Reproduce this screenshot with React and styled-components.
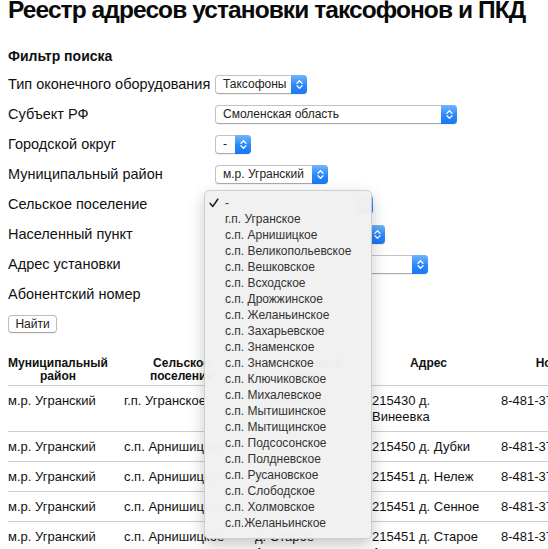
import React from 'react';
import styled, { createGlobalStyle } from 'styled-components';

const GlobalStyle = createGlobalStyle`
  html, body {
    margin: 0;
    padding: 0;
    background: #ffffff;
    overflow: hidden;
  }
  body {
    font-family: "Liberation Sans", Arial, Helvetica, sans-serif;
    color: #111111;
  }
`;

const Page = styled.div`
  padding: 0 8px;
  width: 760px;
`;

const Title = styled.h1`
  font-size: 24.5px;
  line-height: 30px;
  letter-spacing: -0.92px;
  font-weight: bold;
  margin: -5px 0 0;
  white-space: nowrap;
  color: #0a0a0a;
`;

const FilterTitle = styled.h3`
  font-size: 14px;
  line-height: 18px;
  font-weight: bold;
  margin: 22px 0 4px;
`;

const FormGrid = styled.div`
  display: grid;
  grid-template-columns: 207px auto;
  grid-auto-rows: 30px;
  align-items: center;
`;

const Label = styled.div`
  font-size: 14.5px;
  color: #111;
  white-space: nowrap;
`;

const Field = styled.div`
  position: relative;
  display: flex;
  align-items: center;
  height: 30px;
`;

const SelectBox = styled.div`
  display: flex;
  align-items: stretch;
  width: ${(p) => p.$w}px;
  height: 19px;
  box-sizing: border-box;
  border: 1px solid #c2c2c2;
  border-bottom-color: #a9a9a9;
  border-radius: 4px;
  background: #ffffff;
  box-shadow: 0 1px 1px rgba(0, 0, 0, 0.06);
  font-size: 12px;
  color: #222;
`;

const SelectText = styled.span`
  flex: 1;
  padding-left: 7px;
  line-height: 17px;
  white-space: nowrap;
  overflow: hidden;
`;

const ArrowBtn = styled.span`
  width: 16px;
  margin: -1px -1px -1px 0;
  border-radius: 0 4px 4px 0;
  background: linear-gradient(#70b6fc, #2a87fa 55%, #1878f5);
  display: flex;
  align-items: center;
  justify-content: center;
`;

const TextInput = styled.div`
  width: 140px;
  height: 19px;
  border: 1px solid #c2c2c2;
  box-sizing: border-box;
`;

const Button = styled.button`
  margin-top: 6px;
  height: 18px;
  width: 49px;
  padding: 0;
  font-family: inherit;
  font-size: 12px;
  color: #222;
  background: #ffffff;
  border: 1px solid #bdbdbd;
  border-bottom-color: #a5a5a5;
  border-radius: 4px;
  box-shadow: 0 1px 1px rgba(0, 0, 0, 0.06);
`;

const Menu = styled.div`
  position: absolute;
  left: -11px;
  top: 1px;
  width: 168px;
  box-sizing: border-box;
  padding: 4px 0 7px;
  background: rgba(241, 241, 241, 0.98);
  border: 1px solid rgba(0, 0, 0, 0.14);
  border-radius: 5px;
  box-shadow: 0 6px 16px rgba(0, 0, 0, 0.22);
  z-index: 10;
`;

const MenuItem = styled.div`
  position: relative;
  height: 16px;
  line-height: 16px;
  padding-left: 20px;
  font-size: 12px;
  color: #333;
  white-space: nowrap;
`;

const Check = styled.svg`
  position: absolute;
  left: 4px;
  top: 3px;
`;

const Table = styled.table`
  margin-top: 18px;
  border-collapse: collapse;
  table-layout: fixed;
  width: 617px;
`;

const Th = styled.th`
  box-sizing: border-box;
  width: ${(p) => p.$w}px;
  padding: 6px 16px 2px 0;
  font-size: 12px;
  line-height: 13px;
  font-weight: bold;
  text-align: center;
  vertical-align: top;
  border-bottom: 1px solid #cfcfcf;
  color: #111;
`;

const Td = styled.td`
  box-sizing: border-box;
  padding: 7px 16px 6px 0;
  font-size: 13px;
  line-height: 16px;
  vertical-align: top;
  border-top: 1px solid #cfcfcf;
  color: #111;
  white-space: ${(p) => (p.$nowrap ? 'nowrap' : 'normal')};
`;

const Chevrons = () => (
  <svg width="7" height="11" viewBox="0 0 7 11">
    <path d="M1 4.2 L3.5 1.6 L6 4.2 M1 6.8 L3.5 9.4 L6 6.8" fill="none" stroke="#fff" strokeWidth="1.3" strokeLinecap="round" strokeLinejoin="round" />
  </svg>
);

const Select = ({ w, value }) => (
  <SelectBox $w={w}>
    <SelectText>{value}</SelectText>
    <ArrowBtn>
      <Chevrons />
    </ArrowBtn>
  </SelectBox>
);

const settlements = [
  'г.п. Угранское',
  'с.п. Арнишицкое',
  'с.п. Великопольевское',
  'с.п. Вешковское',
  'с.п. Всходское',
  'с.п. Дрожжинское',
  'с.п. Желаньинское',
  'с.п. Захарьевское',
  'с.п. Знаменское',
  'с.п. Знамснское',
  'с.п. Ключиковское',
  'с.п. Михалевское',
  'с.п. Мытишинское',
  'с.п. Мытищинское',
  'с.п. Подсосонское',
  'с.п. Полдневское',
  'с.п. Русановское',
  'с.п. Слободское',
  'с.п. Холмовское',
  'с.п.Желаньинское',
];

const rows = [
  ['м.р. Угранский', 'г.п. Угранское', 'д. Винеевка', '215430 д. Винеевка', '8-481-37-4-11-21'],
  ['м.р. Угранский', 'с.п. Арнишицкое', 'д. Дубки', '215450 д. Дубки', '8-481-37-4-31-45'],
  ['м.р. Угранский', 'с.п. Арнишицкое', 'д. Нележ', '215451 д. Нележ', '8-481-37-4-32-17'],
  ['м.р. Угранский', 'с.п. Арнишицкое', 'д. Сенное', '215451 д. Сенное', '8-481-37-4-32-40'],
  ['м.р. Угранский', 'с.п. Арнишицкое', 'д. Старое Александровское', '215451 д. Старое Александровское', '8-481-37-4-33-02'],
];

const App = () => (
  <Page>
    <GlobalStyle />
    <Title>Реестр адресов установки таксофонов и ПКД</Title>
    <FilterTitle>Фильтр поиска</FilterTitle>
    <FormGrid>
      <Label>Тип оконечного оборудования</Label>
      <Field>
        <Select w={92} value="Таксофоны" />
      </Field>
      <Label>Субъект РФ</Label>
      <Field>
        <Select w={242} value="Смоленская область" />
      </Field>
      <Label>Городской округ</Label>
      <Field>
        <Select w={36} value="-" />
      </Field>
      <Label>Муниципальный район</Label>
      <Field>
        <Select w={113} value="м.р. Угранский" />
      </Field>
      <Label>Сельское поселение</Label>
      <Field>
        <Select w={158} value="-" />
        <Menu>
          <MenuItem>
            <Check width="10" height="10" viewBox="0 0 10 10">
              <path d="M1.2 5.4 L3.8 8.4 L8.8 1.2" fill="none" stroke="#222" strokeWidth="1.6" strokeLinecap="round" strokeLinejoin="round" />
            </Check>
            -
          </MenuItem>
          {settlements.map((s) => (
            <MenuItem key={s}>{s}</MenuItem>
          ))}
        </Menu>
      </Field>
      <Label>Населенный пункт</Label>
      <Field>
        <Select w={170} value="-" />
      </Field>
      <Label>Адрес установки</Label>
      <Field>
        <Select w={213} value="-" />
      </Field>
      <Label>Абонентский номер</Label>
      <Field>
        <TextInput />
      </Field>
    </FormGrid>
    <Button>Найти</Button>
    <Table>
      <thead>
        <tr>
          <Th $w={116}>Муниципальный район</Th>
          <Th $w={131}>Сельское поселение</Th>
          <Th $w={117}>Населенный пункт</Th>
          <Th $w={129}>Адрес</Th>
          <Th $w={124}>Номер</Th>
        </tr>
      </thead>
      <tbody>
        {rows.map((r, i) => (
          <tr key={i}>
            {r.map((c, j) => (
              <Td key={j} $nowrap={j === 4}>{c}</Td>
            ))}
          </tr>
        ))}
      </tbody>
    </Table>
  </Page>
);

export default App;
